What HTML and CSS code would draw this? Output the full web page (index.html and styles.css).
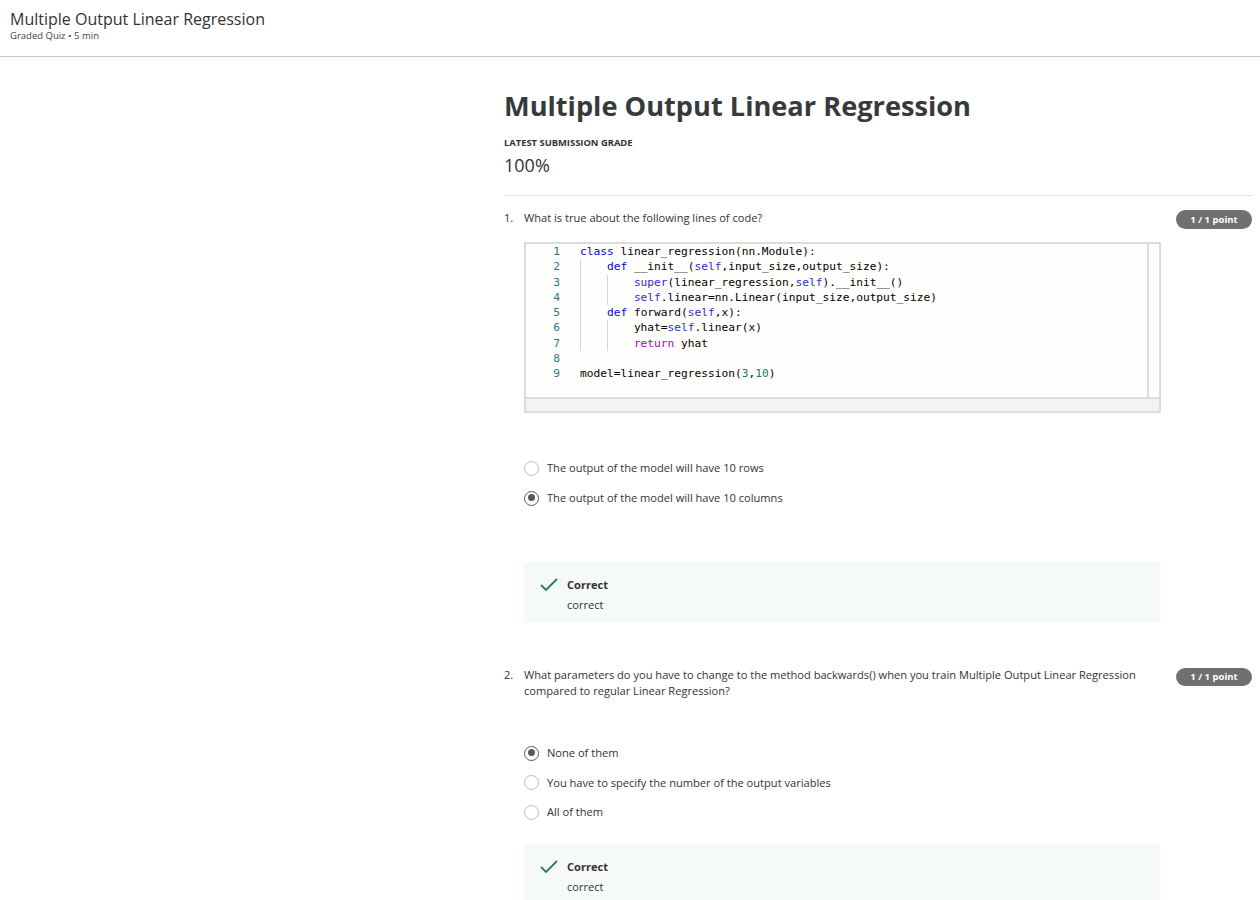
FILE: index.html
```html
<!DOCTYPE html>
<html lang="en">
<head>
<meta charset="utf-8">
<title>Multiple Output Linear Regression</title>
<link rel="stylesheet" href="styles.css">
</head>
<body>
<header class="topbar">
  <div class="tb-title">Multiple Output Linear Regression</div>
  <div class="tb-sub">Graded Quiz • 5 min</div>
</header>
<main class="content">
  <h1 class="page-title">Multiple Output Linear Regression</h1>
  <div class="grade-label">LATEST SUBMISSION GRADE</div>
  <div class="grade">100%</div>
  <div class="divider"></div>

  <section class="question q1">
    <div class="q-head">
      <span class="q-num">1.</span>
      <div class="q-text">What is true about the following lines of code?</div>
      <span class="badge">1 / 1 point</span>
    </div>
    <div class="q-body">
      <div class="code-box">
        <div class="code-main">
          <div class="code-area">
            <div class="gutter">
              <div>1</div><div>2</div><div>3</div><div>4</div><div>5</div><div>6</div><div>7</div><div>8</div><div>9</div>
            </div>
            <div class="code">
              <div class="ln"><span class="kw">class</span> linear_regression(nn.Module):</div>
              <div class="ln"><span class="ig"></span><span class="kw">def</span> __init__(<span class="sf">self</span>,input_size,output_size):</div>
              <div class="ln"><span class="ig"></span><span class="ig"></span><span class="sf">super</span>(linear_regression,<span class="sf">self</span>).__init__()</div>
              <div class="ln"><span class="ig"></span><span class="ig"></span><span class="sf">self</span>.linear=nn.Linear(input_size,output_size)</div>
              <div class="ln"><span class="ig"></span><span class="kw">def</span> forward(<span class="sf">self</span>,x):</div>
              <div class="ln"><span class="ig"></span><span class="ig"></span>yhat=<span class="sf">self</span>.linear(x)</div>
              <div class="ln"><span class="ig"></span><span class="ig"></span><span class="rt">return</span> yhat</div>
              <div class="ln"> </div>
              <div class="ln">model=linear_regression(<span class="num">3</span>,<span class="num">10</span>)</div>
            </div>
          </div>
          <div class="vscroll"></div>
        </div>
        <div class="hscroll"></div>
      </div>

      <div class="options first">
        <label class="option"><span class="radio"></span><span>The output of the model will have 10 rows</span></label>
        <label class="option"><span class="radio checked"></span><span>The output of the model will have 10 columns</span></label>
      </div>

      <div class="feedback">
        <div class="fb-head">
          <svg class="check" width="18" height="14" viewBox="0 0 18 14"><polyline points="1,7 6,12 17,1" fill="none" stroke="#1f8354" stroke-width="1.8"/></svg>
          <span class="fb-title">Correct</span>
        </div>
        <div class="fb-text">correct</div>
      </div>
    </div>
  </section>

  <section class="question q2">
    <div class="q-head">
      <span class="q-num">2.</span>
      <div class="q-text">What parameters do you have to change to the method backwards() when you train Multiple Output Linear Regression compared to regular Linear Regression?</div>
      <span class="badge">1 / 1 point</span>
    </div>
    <div class="q-body">
      <div class="options second">
        <label class="option"><span class="radio checked"></span><span>None of them</span></label>
        <label class="option"><span class="radio"></span><span>You have to specify the number of the output variables</span></label>
        <label class="option"><span class="radio"></span><span>All of them</span></label>
      </div>

      <div class="feedback">
        <div class="fb-head">
          <svg class="check" width="18" height="14" viewBox="0 0 18 14"><polyline points="1,7 6,12 17,1" fill="none" stroke="#1f8354" stroke-width="1.8"/></svg>
          <span class="fb-title">Correct</span>
        </div>
        <div class="fb-text">correct</div>
      </div>
    </div>
  </section>
</main>
</body>
</html>
```

FILE: styles.css
```css
* { box-sizing: border-box; }
html, body { margin: 0; padding: 0; background: #fff; }
body {
  font-family: "Open Sans", "Noto Sans", sans-serif;
  color: #373a3c;
}

.topbar {
  height: 57px;
  border-bottom: 1px solid #c8c8c8;
  padding: 8px 10px 0;
}
.tb-title {
  font-size: 16px;
  line-height: 22px;
  color: #333;
}
.tb-sub {
  font-size: 9.5px;
  line-height: 12px;
  color: #444;
}

.content {
  padding-left: 504px;
  padding-right: 8px;
}
.page-title {
  margin: 0;
  padding-top: 31px;
  font-size: 27.2px;
  line-height: 36px;
  font-weight: 700;
  color: #373a3c;
}
.grade-label {
  margin-top: 13px;
  font-size: 9.4px;
  line-height: 12px;
  font-weight: 700;
  color: #333;
}
.grade {
  margin-top: 4px;
  font-size: 18px;
  line-height: 24px;
  color: #333;
}
.divider {
  margin-top: 18px;
  height: 1px;
  background: #e0e0e0;
}

.question { font-size: 11.1px; color: #333; }
.q-head {
  display: flex;
  align-items: flex-start;
}
.q1 .q-head { margin-top: 14px; }
.q2 .q-head { margin-top: 44px; }
.q-num { width: 20px; line-height: 16px; flex: none; }
.q-text { flex: 1; line-height: 16px; padding-right: 34px; }
.badge {
  flex: none;
  width: 76px;
  height: 19px;
  margin-top: 0;
  border-radius: 10px;
  background: #707070;
  color: #fff;
  font-size: 9.5px;
  font-weight: 700;
  line-height: 19px;
  text-align: center;
}
.q2 .badge { height: 18px; line-height: 18px; margin-top: 1px; }
.q-body { padding-left: 20px; }

.code-box {
  margin-top: 13px;
  width: 637px;
  border: 2px solid #dcdcdc;
  background: #fefefc;
}
.code-main { display: flex; }
.code-area {
  flex: 1;
  display: flex;
  padding-bottom: 16px;
  font-family: "DejaVu Sans Mono", monospace;
  font-size: 11.2px;
  line-height: 15.25px;
  color: #000;
}
.gutter {
  width: 34px;
  text-align: right;
  color: #237893;
}
.code { padding-left: 20px; }
.ln { height: 15.25px; white-space: pre; }
.ig {
  display: inline-block;
  width: 4ch;
  height: 15.25px;
  vertical-align: top;
  border-left: 1px solid #d6d6d6;
}
.kw { color: #0000ff; }
.sf { color: #2b2bf0; }
.rt { color: #af00db; }
.num { color: #098658; }
.vscroll {
  width: 12px;
  border-left: 2px solid #dcdcdc;
}
.hscroll {
  height: 14px;
  border-top: 2px solid #dcdcdc;
  background: #f3f3f3;
}

.options { display: flex; flex-direction: column; }
.options.first { margin-top: 47px; gap: 14px; }
.options.second { margin-top: 46px; gap: 13.5px; }
.option {
  display: flex;
  align-items: center;
  gap: 8px;
  line-height: 16px;
}
.radio {
  width: 15px;
  height: 15px;
  border-radius: 50%;
  border: 1.5px solid #bdbdbd;
  background: #fff;
  flex: none;
  position: relative;
}
.radio.checked {
  border: 1.5px solid #5a5a5a;
}
.radio.checked::after {
  content: "";
  position: absolute;
  left: 2.5px;
  top: 2.5px;
  width: 7px;
  height: 7px;
  border-radius: 50%;
  background: #5a5a5a;
}

.feedback {
  width: 636px;
  background: #f5f9f8;
  padding: 15px 16px 10px;
}
.q1 .feedback { margin-top: 56px; height: 61px; }
.q2 .feedback { margin-top: 24px; height: 60px; }
.fb-head { display: flex; align-items: center; gap: 9px; height: 16px; }
.check { display: block; flex: none; }
.fb-title { font-weight: 700; color: #333; line-height: 16px; }
.fb-text { padding-left: 27px; margin-top: 4px; line-height: 16px; }
```
